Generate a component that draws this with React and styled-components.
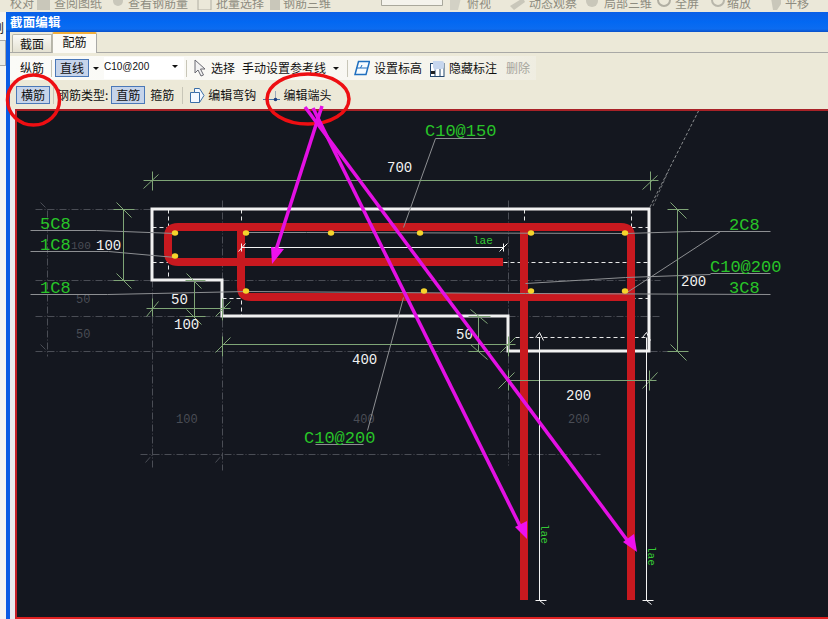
import React from "react";
import styled, { createGlobalStyle } from "styled-components";

const Global = createGlobalStyle`
  html, body { margin: 0; padding: 0; background: #fff; }
  #root { width: 828px; height: 619px; overflow: hidden; }
`;

const Page = styled.div`
  width: 828px; height: 619px; overflow: hidden; display: flex; flex-direction: column;
  font-family: "Noto Sans CJK SC", "Liberation Sans", sans-serif; font-size: 12px; color: #111;
`;
const TopStrip = styled.div`
  height: 12px; flex: none; background: #ebe8d9; overflow: hidden; position: relative;
  display: flex; align-items: flex-end; color: #8e8c80;
`;
const TopItem = styled.span`
  flex: none; width: ${p => p.$w}px; margin-left: ${p => p.$ml || 0}px; height: 12px; line-height: 14px;
  white-space: nowrap; transform: translateY(-4px);
`;
const TopIcon = styled.svg`
  flex: none; width: 15px; height: 12px; margin-left: ${p => p.$ml || 0}px; transform: translateY(-2px);
`;
const Body = styled.div`flex: 1; display: flex; min-height: 0;`;
const Desktop = styled.div`
  width: 6px; flex: none; background: #f4f4f2; display: flex; flex-direction: column; position: relative; overflow: hidden;
`;
const DesktopGlyph = styled.span`
  height: 14px; margin-top: 9px; margin-left: -8px; font-size: 12px; line-height: 14px; color: #222; white-space: nowrap;
`;
const DesktopBox = styled.div`
  height: 24px; margin-top: 5px; border: 1px solid #a8a8a8; border-left: 0; background: #ecebe4;
`;
const Win = styled.div`
  flex: 1; min-width: 0; display: flex; flex-direction: column;
  background: #0a5ce4; padding: 0 0 0 4px;
`;
const TitleBar = styled.div`
  height: 20px; flex: none; margin-left: -4px; padding-left: 4px;
  background: linear-gradient(180deg, #0a5fe6 0%, #0368f2 50%, #0c6cf0 85%, #0a50c8 100%);
  color: #fff; font-weight: 700; font-size: 12.5px; line-height: 19px; letter-spacing: .15px;
`;
const TabRow = styled.div`
  height: 21px; flex: none; background: #ece9d8; display: flex; align-items: flex-end; padding-left: 2px;
  border-bottom: 1px solid #a9a9a6; box-sizing: border-box;
`;
const Tab = styled.div`
  box-sizing: border-box; text-align: center;
  ${p => p.$active ? `
    width: 45px; height: 21px; margin-bottom: -1px; background: #fbfaf5; border-top: 2px solid #f0ae3c;
    border-left: 1px solid #b9b8ac; border-right: 1px solid #a9a9a6; line-height: 15px; border-radius: 2px 2px 0 0;
  ` : `
    width: 40px; height: 18px; background: linear-gradient(180deg, #fafaf6, #e4e1d2);
    border: 1px solid #b5b4a8; border-bottom: 0; line-height: 18px; border-radius: 2px 0 0 0;
  `}
`;
const Panel = styled.div`
  flex: 1; min-height: 0; background: #ece9d8; padding: 3px 0 0 0; display: flex; flex-direction: column;
`;
const Bar = styled.div`
  flex: none; box-sizing: border-box; height: ${p => p.$h}px; padding-top: ${p => p.$pt || 0}px;
  display: flex; align-items: center; white-space: nowrap;
  ${p => p.$fill ? `width: 526px; background: linear-gradient(90deg, #fbfbf8 0%, #f8f7f2 70%, #efede1 100%);` : ""}
`;
const Label = styled.span`
  flex: none; margin-left: ${p => p.$ml || 0}px; color: ${p => p.$muted ? "#a5a49c" : "#111"}; line-height: 16px;
`;
const Sep = styled.span`
  flex: none; width: 1px; height: 17px; background: #c8c6b8; margin-left: ${p => p.$ml || 0}px;
`;
const PressedButton = styled.span`
  flex: none; box-sizing: border-box; height: 18px; width: 34px; text-align: center; line-height: 16px;
  margin-left: ${p => p.$ml || 0}px; background: #c6d4ea; border: 1px solid #4a78b8;
`;
const Caret = styled.span`
  flex: none; width: 0; height: 0; margin-left: ${p => p.$ml || 0}px;
  border-left: 3px solid transparent; border-right: 3px solid transparent; border-top: 3px solid #111;
`;
const Combo = styled.span`
  flex: none; box-sizing: border-box; width: 80px; height: 22px; margin-left: ${p => p.$ml || 0}px; background: #fff;
  display: flex; align-items: center; padding: 0 6px 3px 0; justify-content: space-between;
  font-family: "Liberation Sans", sans-serif; font-size: 10px; line-height: 14px;
`;
const BarIcon = styled.svg`
  flex: none; margin-left: ${p => p.$ml || 0}px;
`;
const Canvas = styled.div`
  flex: 1; min-height: 0; margin-left: 5px; box-sizing: border-box; background: #14171f; position: relative;
  border-top: 2px solid #a82227; border-left: 2px solid #c62028; border-bottom: 2px solid #e02020; margin-top: 1px;
  box-shadow: -5px 0 0 #e9e9ee;
`;
const Drawing = styled.svg`
  display: block; width: 811px; height: 506px;
`;
const Annotations = styled.svg`
  position: fixed; left: 0; top: 0; width: 828px; height: 619px; pointer-events: none;
`;

const mono = `"Liberation Mono", "DejaVu Sans Mono", monospace`;
const DimText = styled.text`
  font-family: ${mono}; font-size: ${p => p.$s || 14}px; fill: ${p => p.$c || "#f2f2f2"};
`;

const G = "#7fa576";
const Dim = ({ d, c = G, w = 1, dash }) => (
  <path d={d} fill="none" stroke={c} strokeWidth={w} strokeDasharray={dash} transform="translate(.5 .5)" />
);

const greyDash = "7 2 1 2";
const whiteDash = "4 3";

const dots = [[175,233],[175,256],[246,233],[331,233],[420,233],[531,233],[625,233],[246,291],[424,291],[531,291],[625,291]];

const Drawing2D = () => (
  <Drawing viewBox="17 111 811 506">
    {/* hidden construction grid */}
    <Dim c="#4a4d55" dash={greyDash} d="M35 209H152 M35 280H152 M222 280H660 M35 316H222 M508 316H660 M35 351H508 M650 351H672 M140 454H600 M47 210V356 M152 280V468 M222 200V470 M508 200V465 M40 202L48 210 M40 344L48 352 M145 462L152 454 M215 462L222 454" />
    <path d="M650 207L699 110" stroke="#8b8e90" strokeWidth="1" strokeDasharray="3 2" fill="none" />
    <path d="M653 206L668 172" stroke="#6b6e72" strokeWidth="1" strokeDasharray="3 2" fill="none" />
    <DimText $s={11} $c="#4a4d55" x="71" y="249">100</DimText>
    <DimText $s={12} $c="#4a4d55" x="76" y="303">50</DimText>
    <DimText $s={12} $c="#4a4d55" x="76" y="338">50</DimText>
    <DimText $s={12} $c="#4a4d55" x="176" y="423">100</DimText>
    <DimText $s={12} $c="#4a4d55" x="353" y="423">400</DimText>
    <DimText $s={12} $c="#4a4d55" x="568" y="423">200</DimText>

    {/* inner white dashes */}
    <Dim c="#e8e8e8" dash={whiteDash} d="M168 209V280 M241 209V316 M152 227H168 M152 262H168 M222 298H241 M631 209V227 M524 209V227 M631 227H649 M503 262H649 M631 298H649 M515 337H649" />

    {/* section outline */}
    <path d="M152 209H649V351H508V316H222V280H152Z" fill="none" stroke="#f1f1f1" strokeWidth="3" />

    {/* rebar */}
    <g fill="none" stroke="#c8191f" strokeWidth="8">
      <path d="M503 262H178Q168 262 168 252V237Q168 227 178 227H621Q631 227 631 237V600" />
      <path d="M241 227V287Q241 297 251 297H631" />
      <path d="M524 227V600" />
    </g>

    {/* leaders */}
    <Dim c="#8d8f92" d="M30 230H96L175 233 M30 251H108L175 257 M30 294H107L246 291L525 293L770 294 M246 232H306L625 233L690 231H770 M720 231L625 293 M710 273H770 M710 274L625 277L525 283 M435 138H485 M435 138L403 227 M315 444H363 M367 430L403 297" />

    {/* dimension lines */}
    <Dim d="M143 180H658 M152 171V190 M143 188L158 174 M650 171V190 M642 189L657 175" />
    <Dim d="M113 209H134 M123 209V280 M113 280H134 M116 202L131 217 M116 273L131 288" />
    <Dim d="M667 209H688 M677 209V351 M667 351H688 M670 202L686 218 M670 344L686 360" />
    <Dim d="M146 308H230 M152 298V316 M146 316L158 301 M222 298V320 M215 316L230 301" />
    <Dim d="M185 280H205 M194 280V316 M185 316H205 M186 273L201 288 M186 309L201 324" />
    <Dim d="M222 344H515 M222 336V356 M215 352L230 337 M508 336V356 M500 352L515 337" />
    <Dim d="M468 316H490 M478 316V351 M468 351H490 M470 309L487 323 M470 344L487 359" />
    <Dim d="M508 380H656 M508 370V390 M498 388L514 372 M649 370V390 M642 388L657 372" />

    {/* anchorage dimensions */}
    <Dim c="#f4f4f4" d="M241 247H503 M241 243V251 M238 251L245 243 M503 243V251 M499 251L507 243 M539 337V600 M646 337V600 M535 600H546 M539 600L544 604 M642 600H653 M646 600L651 604 M535 337L539 332L543 340 M642 337L646 332L650 340" />

    {dots.map(([x, y]) => <ellipse key={x + "-" + y} cx={x} cy={y} rx="3.2" ry="2.8" fill="#f5d42c" />)}

    <DimText x="387" y="172">700</DimText>
    <DimText x="96" y="250">100</DimText>
    <DimText x="171" y="304">50</DimText>
    <DimText x="174" y="329">100</DimText>
    <DimText x="352" y="364">400</DimText>
    <DimText x="456" y="339">50</DimText>
    <DimText x="566" y="400">200</DimText>
    <DimText x="681" y="286">200</DimText>

    <DimText $c="#28c428" $s={17} x="40" y="229">5C8</DimText>
    <DimText $c="#28c428" $s={17} x="40" y="250">1C8</DimText>
    <DimText $c="#28c428" $s={17} x="40" y="293">1C8</DimText>
    <DimText $c="#28c428" $s={17} x="425" y="136">C10@150</DimText>
    <DimText $c="#28c428" $s={17} x="304" y="443">C10@200</DimText>
    <DimText $c="#28c428" $s={17} x="729" y="230">2C8</DimText>
    <DimText $c="#28c428" $s={17} x="710" y="272">C10@200</DimText>
    <DimText $c="#28c428" $s={17} x="729" y="293">3C8</DimText>
    <DimText $c="#35c935" $s={11} x="473" y="244">lae</DimText>
    <DimText $c="#35c935" $s={11} transform="translate(541 524) rotate(90)">lae</DimText>
    <DimText $c="#35c935" $s={11} transform="translate(648 546) rotate(90)">lae</DimText>
  </Drawing>
);

const Top = () => (
  <TopStrip>
    <TopItem $ml={10} $w={20}>校对</TopItem>
    <TopIcon $ml={6} viewBox="0 0 15 12"><path d="M1 0h13v12H1z" fill="#c9c7ba" /></TopIcon>
    <TopItem $ml={3} $w={56}>查阅图纸</TopItem>
    <TopIcon $ml={1} viewBox="0 0 15 12"><circle cx="7" cy="3" r="5" fill="#c9c7ba" /></TopIcon>
    <TopItem $ml={2} $w={68}>查看钢筋量</TopItem>
    <TopIcon $ml={1} viewBox="0 0 15 12"><path d="M1 0h13v12H1z" fill="none" stroke="#b0aea2" /></TopIcon>
    <TopItem $ml={4} $w={52}>批量选择</TopItem>
    <TopIcon $ml={0} viewBox="0 0 15 12"><path d="M2 0h10v12H2z" fill="#c9c7ba" /></TopIcon>
    <TopItem $ml={0} $w={48}>钢筋三维</TopItem>
    <TopItem $ml={50} $w={62}><BarIcon width="62" height="12" viewBox="0 0 62 12"><path d="M.5 0v9.5h61V0" fill="#f4f3ec" stroke="#a9a89c" /></BarIcon></TopItem>
    <TopIcon $ml={5} viewBox="0 0 15 12"><path d="M2 0h11l-3 12H2z" fill="#d3d1c5" /></TopIcon>
    <TopItem $ml={4} $w={43}>俯视</TopItem>
    <TopIcon $ml={0} viewBox="0 0 15 12"><path d="M0 8L13 0l2 4L4 12z" fill="#c9c7ba" /></TopIcon>
    <TopItem $ml={4} $w={52}>动态观察</TopItem>
    <TopIcon $ml={4} viewBox="0 0 15 12"><circle cx="7" cy="3" r="6" fill="#c9c7ba" /></TopIcon>
    <TopItem $ml={4} $w={52}>局部三维</TopItem>
    <TopIcon $ml={0} viewBox="0 0 15 12"><circle cx="8" cy="2" r="6" fill="none" stroke="#b0aea2" strokeWidth="2" /></TopIcon>
    <TopItem $ml={4} $w={28}>全屏</TopItem>
    <TopIcon $ml={8} viewBox="0 0 15 12"><circle cx="7" cy="2" r="6" fill="none" stroke="#b8b6aa" strokeWidth="2" /></TopIcon>
    <TopItem $ml={1} $w={33}>缩放</TopItem>
    <TopIcon $ml={8} viewBox="0 0 15 12"><path d="M3 0h10v6l-4 6H5z" fill="#c9c7ba" /></TopIcon>
    <TopItem $ml={2} $w={24}>平移</TopItem>
  </TopStrip>
);

export default function App() {
  return (
    <Page>
      <Global />
      <Top />
      <Body>
        <Desktop>
          <DesktopGlyph>刨</DesktopGlyph>
          <DesktopBox />
        </Desktop>
        <Win>
          <TitleBar>截面编辑</TitleBar>
          <TabRow>
            <Tab>截面</Tab>
            <Tab $active>配筋</Tab>
          </TabRow>
          <Panel>
            <Bar $h={24} $fill>
              <Label $ml={10}>纵筋</Label>
              <Sep $ml={7} />
              <PressedButton $ml={3}>直线</PressedButton>
              <Caret $ml={4} />
              <Combo $ml={5}>C10@200<Caret /></Combo>
              <Sep $ml={2} />
              <BarIcon $ml={7} width="12" height="18" viewBox="0 0 12 18">
                <path d="M1 1v13l3-3 3 6 2.5-1-3-6h4.5z" fill="#f2f2f2" stroke="#6a6a72" />
              </BarIcon>
              <Label $ml={5}>选择</Label>
              <Label $ml={7}>手动设置参考线</Label>
              <Caret $ml={7} />
              <Sep $ml={8} />
              <BarIcon $ml={6} width="16" height="16" viewBox="0 0 16 16">
                <path d="M4.5 1.5h11l-3.5 13H1z" fill="#f6fbff" stroke="#1f6fbf" strokeWidth="1.5" />
                <path d="M2.5 8h11M8 5l-1.5 3" fill="none" stroke="#1f6fbf" />
              </BarIcon>
              <Label $ml={4}>设置标高</Label>
              <BarIcon $ml={8} width="15" height="17" viewBox="0 0 15 17">
                <rect x=".5" y="3.5" width="13.5" height="13" fill="#fff" stroke="#25486f" />
                <path d="M5 4v12M10 8v8" stroke="#25486f" />
                <rect x="1" y="11" width="4" height="3" fill="#222" />
                <path d="M3 1h9a2 2 0 0 1 2 2v4a2 2 0 0 1-2 2H7L4 11V9a3 3 0 0 1-1-2z" fill="#c6d6ee" />
              </BarIcon>
              <Label $ml={4}>隐藏标注</Label>
              <Label $ml={9} $muted>删除</Label>
            </Bar>
            <Bar $h={28} $pt={2}>
              <PressedButton $ml={6}>横筋</PressedButton>
              <Sep $ml={3} />
              <Label $ml={3}>钢筋类型:</Label>
              <PressedButton $ml={3}>直筋</PressedButton>
              <Label $ml={5}>箍筋</Label>
              <Sep $ml={8} />
              <BarIcon $ml={6} width="16" height="17" viewBox="0 0 16 17">
                <path d="M1.5 5.5h4v-4h5l4.5 7-4.5 7H1.5z" fill="#f4f8ff" stroke="#3a6ea8" />
                <path d="M5.5 5.5h5v10" fill="none" stroke="#3a6ea8" />
              </BarIcon>
              <Label $ml={3}>编辑弯钩</Label>
              <BarIcon $ml={7} width="17" height="16" viewBox="0 0 17 16">
                <path d="M0 12.5h17" stroke="#4a78a8" />
                <path d="M12.5 4v8" stroke="#9ab" />
                <circle cx="12.5" cy="12.5" r="1.8" fill="#1f3f7f" />
              </BarIcon>
              <Label $ml={3}>编辑端头</Label>
            </Bar>
            <Canvas>
              <Drawing2D />
            </Canvas>
          </Panel>
        </Win>
      </Body>
      <Annotations viewBox="0 0 828 619">
        <g fill="none" stroke="#ee0e12" strokeWidth="3.5">
          <ellipse cx="33.5" cy="100" rx="26" ry="25" />
          <ellipse cx="308" cy="99" rx="41" ry="25" />
        </g>
        <g stroke="#e410e4" strokeWidth="3.5" fill="none">
          <path d="M322 106L276 250" />
          <path d="M313 108L522 530" />
          <path d="M305 107L630 544" />
        </g>
        <g fill="#ee10ee">
          <path d="M272 264L271 247L284 249Z" />
          <path d="M527 539L515 527L527 521Z" />
          <path d="M637 552L623 542L634 534Z" />
        </g>
      </Annotations>
    </Page>
  );
}
